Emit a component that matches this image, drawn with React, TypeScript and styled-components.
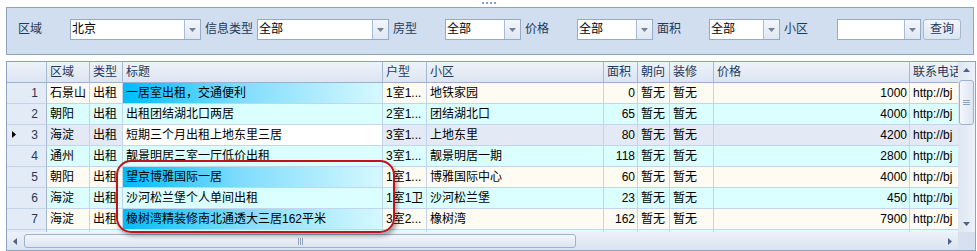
import styled, { createGlobalStyle } from 'styled-components';

const GlobalStyle = createGlobalStyle`
  html, body {
    margin: 0;
    padding: 0;
    background: #fff;
  }
  body {
    font-family: "Liberation Sans", "Noto Sans CJK SC", sans-serif;
    font-size: 12px;
    color: #000;
  }
  * {
    box-sizing: border-box;
  }
`;

interface House {
  no: number;
  area: string;
  kind: string;
  title: string;
  layout: string;
  estate: string;
  size: number;
  facing: string;
  decor: string;
  price: number;
  phone: string;
  hot?: boolean;
}

type Tone = 'cream' | 'cyan' | 'current';

const COLS = '40px 43px 33px 260px 44px 177px 34px 32px 44px 196px 80px';

const HEADERS = ['区域', '类型', '标题', '户型', '小区', '面积', '朝向', '装修', '价格', '联系电话'];

const houses: House[] = [
  { no: 1, area: '石景山', kind: '出租', title: '一居室出租，交通便利', layout: '1室1...', estate: '地铁家园', size: 0, facing: '暂无', decor: '暂无', price: 1000, phone: 'http://bj', hot: true },
  { no: 2, area: '朝阳', kind: '出租', title: '出租团结湖北口两居', layout: '2室1...', estate: '团结湖北口', size: 65, facing: '暂无', decor: '暂无', price: 4000, phone: 'http://bj' },
  { no: 3, area: '海淀', kind: '出租', title: '短期三个月出租上地东里三居', layout: '3室1...', estate: '上地东里', size: 80, facing: '暂无', decor: '暂无', price: 4200, phone: 'http://bj' },
  { no: 4, area: '通州', kind: '出租', title: '靓景明居三室一厅低价出租', layout: '3室1...', estate: '靓景明居一期', size: 118, facing: '暂无', decor: '暂无', price: 2800, phone: 'http://bj' },
  { no: 5, area: '朝阳', kind: '出租', title: '望京博雅国际一居', layout: '1室1...', estate: '博雅国际中心', size: 60, facing: '暂无', decor: '暂无', price: 4000, phone: 'http://bj', hot: true },
  { no: 6, area: '海淀', kind: '出租', title: '沙河松兰堡个人单间出租', layout: '1室1卫', estate: '沙河松兰堡', size: 23, facing: '暂无', decor: '暂无', price: 450, phone: 'http://bj' },
  { no: 7, area: '海淀', kind: '出租', title: '橡树湾精装修南北通透大三居162平米', layout: '3室2...', estate: '橡树湾', size: 162, facing: '暂无', decor: '暂无', price: 7900, phone: 'http://bj', hot: true },
  { no: 8, area: '', kind: '', title: '', layout: '', estate: '', size: 0, facing: '', decor: '', price: 0, phone: '' },
];

const CURRENT_ROW = 3;

const toneOf = (no: number): Tone => {
  if (no === CURRENT_ROW) return 'current';
  return no % 2 === 1 ? 'cream' : 'cyan';
};

const toneColor: Record<Tone, string> = {
  cream: '#fdfbf2',
  cyan: '#dbfefe',
  current: '#e3eaf5',
};

const filters = [
  { label: '区域', labelWidth: 52, value: '北京', width: 131 },
  { label: '信息类型', labelWidth: 52, value: '全部', width: 132 },
  { label: '房型', labelWidth: 52, value: '全部', width: 76 },
  { label: '价格', labelWidth: 52, value: '全部', width: 76 },
  { label: '面积', labelWidth: 52, value: '全部', width: 71 },
  { label: '小区', labelWidth: 53, value: '', width: 84 },
];

const Arrow = ({ dir, color = '#5d6f8c' }: { dir: 'up' | 'down' | 'left' | 'right'; color?: string }) => {
  const pts = {
    down: '0,0 7,0 3.5,4',
    up: '0,4 7,4 3.5,0',
    left: '4,0 4,7 0,3.5',
    right: '0,0 0,7 4,3.5',
  }[dir];
  const vertical = dir === 'up' || dir === 'down';
  return (
    <svg width={vertical ? 7 : 4} height={vertical ? 4 : 7} viewBox={vertical ? '0 0 7 4' : '0 0 4 7'}>
      <polygon points={pts} fill={color} />
    </svg>
  );
};

const App = () => {
  return (
    <>
      <GlobalStyle />
      <Page>
        <Splitter>
          <Dot />
          <Dot />
          <Dot />
          <Dot />
        </Splitter>

        <FilterPanel>
          {filters.map((f, idx) => (
            <Field key={idx} $first={idx === 0}>
              <FieldLabel $width={f.labelWidth}>{f.label}</FieldLabel>
              <Combo $width={f.width}>
                <ComboText>{f.value}</ComboText>
                <ComboButton>
                  <Arrow dir='down' color='#73839c' />
                </ComboButton>
              </Combo>
            </Field>
          ))}
          <QueryButton>查询</QueryButton>
        </FilterPanel>

        <GridFrame>
          <GridMain>
            <Viewport>
              <HeaderRow>
                <HeaderCell />
                {HEADERS.map((h) => (
                  <HeaderCell key={h}>{h}</HeaderCell>
                ))}
              </HeaderRow>

              {houses.map((h) => {
                const tone = toneOf(h.no);
                const isCurrent = tone === 'current';
                const filled = h.title !== '';
                return (
                  <DataRow key={h.no} $bg={toneColor[tone]}>
                    <RowHead>
                      {isCurrent && (
                        <Indicator>
                          <Arrow dir='right' color='#000' />
                        </Indicator>
                      )}
                      {filled ? h.no : ''}
                    </RowHead>
                    <Cell>{h.area}</Cell>
                    <Cell>{h.kind}</Cell>
                    <TitleCell $hot={!!h.hot} $focus={isCurrent}>
                      {h.title}
                    </TitleCell>
                    <Cell>{h.layout}</Cell>
                    <Cell>{h.estate}</Cell>
                    <Cell $right>{filled ? h.size : ''}</Cell>
                    <Cell>{h.facing}</Cell>
                    <Cell>{h.decor}</Cell>
                    <Cell $right>{filled ? h.price : ''}</Cell>
                    <Cell>{h.phone}</Cell>
                  </DataRow>
                );
              })}
            </Viewport>

            <VScroll>
              <VArrowBox>
                <Arrow dir='up' color='#4f6386' />
              </VArrowBox>
              <VThumb>
                <GripH />
                <GripH />
                <GripH />
              </VThumb>
              <Filler />
              <VArrowBox>
                <Arrow dir='down' color='#4f6386' />
              </VArrowBox>
            </VScroll>
          </GridMain>

          <HScrollRow>
            <HScroll>
              <HArrowBox>
                <Arrow dir='left' color='#4f6386' />
              </HArrowBox>
              <HThumb>
                <GripV />
                <GripV />
                <GripV />
              </HThumb>
              <Filler />
              <HArrowBox>
                <Arrow dir='right' color='#4f6386' />
              </HArrowBox>
            </HScroll>
            <Corner />
          </HScrollRow>

          <Callout />
        </GridFrame>
      </Page>
    </>
  );
};

const Page = styled.div`
  width: 977px;
  height: 251px;
  padding-left: 6px;
  overflow: hidden;
`;

const Splitter = styled.div`
  height: 7px;
  width: 968px;
  display: flex;
  justify-content: center;
  gap: 2px;
  padding-top: 2px;
  padding-right: 3px;
`;

const Dot = styled.div`
  width: 2px;
  height: 2px;
  background: #8aa3c6;
`;

const FilterPanel = styled.div`
  width: 968px;
  height: 48px;
  border: 1px solid #8ea3c2;
  background: #d1deef;
  display: flex;
  align-items: flex-start;
  padding: 11px 0 0 11px;
`;

const Field = styled.div<{ $first: boolean }>`
  display: flex;
  margin-left: ${(props) => (props.$first ? 0 : 4)}px;
`;

const FieldLabel = styled.div<{ $width: number }>`
  width: ${(props) => props.$width}px;
  line-height: 21px;
  color: #1e395b;
  white-space: nowrap;
`;

const Combo = styled.div<{ $width: number }>`
  width: ${(props) => props.$width}px;
  height: 21px;
  border: 1px solid #95aac8;
  background: #fff;
  display: flex;
`;

const ComboText = styled.div`
  flex: 1;
  padding-left: 1px;
  line-height: 19px;
  color: #000;
`;

const ComboButton = styled.div`
  width: 16px;
  border-left: 1px solid #a9bcd6;
  background: linear-gradient(#f4f7fb, #dfe7f2);
  display: flex;
  align-items: center;
  justify-content: center;
`;

const QueryButton = styled.div`
  margin-left: 2px;
  width: 38px;
  height: 21px;
  border: 1px solid #a4b8d4;
  border-radius: 3px;
  background: linear-gradient(#f3f6fb, #dbe5f1);
  color: #1e395b;
  line-height: 19px;
  text-align: center;
`;

const GridFrame = styled.div`
  position: relative;
  margin-top: 6px;
  width: 970px;
  height: 190px;
  border: 1px solid #8ea3c2;
  background: #fff;
`;

const GridMain = styled.div`
  display: flex;
  height: 170px;
`;

const Viewport = styled.div`
  width: 951px;
  height: 170px;
  overflow: hidden;
`;

const HeaderRow = styled.div`
  display: grid;
  grid-template-columns: ${COLS};
  height: 21px;
  background: linear-gradient(#eef3fa, #dbe4f1);
`;

const HeaderCell = styled.div`
  border-right: 1px solid #a6b9d4;
  border-bottom: 1px solid #9db1ce;
  padding: 0 3px;
  line-height: 20px;
  color: #1e395b;
  white-space: nowrap;
  overflow: hidden;
`;

const DataRow = styled.div<{ $bg: string }>`
  display: grid;
  grid-template-columns: ${COLS};
  height: 21px;
  background: ${(props) => props.$bg};
`;

const Cell = styled.div<{ $right?: boolean }>`
  border-right: 1px solid #c3d4ed;
  border-bottom: 1px solid #c3d4ed;
  padding: 0 2px 0 3px;
  line-height: 20px;
  white-space: nowrap;
  overflow: hidden;
  text-align: ${(props) => (props.$right ? 'right' : 'left')};
`;

const TitleCell = styled(Cell)<{ $hot: boolean; $focus: boolean }>`
  background: ${(props) =>
    props.$hot
      ? 'linear-gradient(to right, #00bcf8 0%, #7fdcfc 45%, #d6f8ff 100%)'
      : props.$focus
      ? '#fff'
      : 'transparent'};
`;

const RowHead = styled.div`
  position: relative;
  border-right: 1px solid #a6b9d4;
  border-bottom: 1px solid #c3d4ed;
  background: #e3ebf6;
  padding-right: 8px;
  line-height: 20px;
  text-align: right;
  color: #1e395b;
`;

const Indicator = styled.span`
  position: absolute;
  left: 5px;
  top: 6px;
  display: flex;
`;

const VScroll = styled.div`
  width: 17px;
  display: flex;
  flex-direction: column;
  align-items: center;
  background: linear-gradient(to right, #dde6f2, #edf2f9);
`;

const VArrowBox = styled.div`
  width: 17px;
  height: 16px;
  display: flex;
  align-items: center;
  justify-content: center;
`;

const VThumb = styled.div`
  margin-top: 2px;
  width: 15px;
  height: 45px;
  border: 1px solid #9db2cf;
  border-radius: 3px;
  background: linear-gradient(to right, #f4f7fc, #dce5f1);
  display: flex;
  flex-direction: column;
  align-items: center;
  justify-content: center;
  gap: 1px;
`;

const GripH = styled.div`
  width: 7px;
  height: 1px;
  background: #8ea3c2;
`;

const Filler = styled.div`
  flex: 1;
`;

const HScrollRow = styled.div`
  display: flex;
  height: 18px;
`;

const HScroll = styled.div`
  width: 951px;
  display: flex;
  align-items: center;
  background: linear-gradient(#edf2f9, #d9e3f0);
`;

const HArrowBox = styled.div`
  width: 16px;
  height: 17px;
  display: flex;
  align-items: center;
  justify-content: center;
`;

const HThumb = styled.div`
  margin-left: 1px;
  width: 552px;
  height: 14px;
  border: 1px solid #9db2cf;
  border-radius: 3px;
  background: linear-gradient(#f4f7fc, #dce5f1);
  display: flex;
  justify-content: center;
  align-items: center;
  gap: 1px;
`;

const GripV = styled.div`
  width: 1px;
  height: 7px;
  background: #8ea3c2;
`;

const Corner = styled.div`
  width: 17px;
  background: #d6e0ee;
`;

const Callout = styled.div`
  position: absolute;
  left: 109px;
  top: 98px;
  width: 279px;
  height: 73px;
  border: 2px solid #c0141c;
  border-radius: 15px;
  box-shadow: 2px 3px 4px rgba(0, 0, 0, 0.35);
  pointer-events: none;
`;

export default App;
